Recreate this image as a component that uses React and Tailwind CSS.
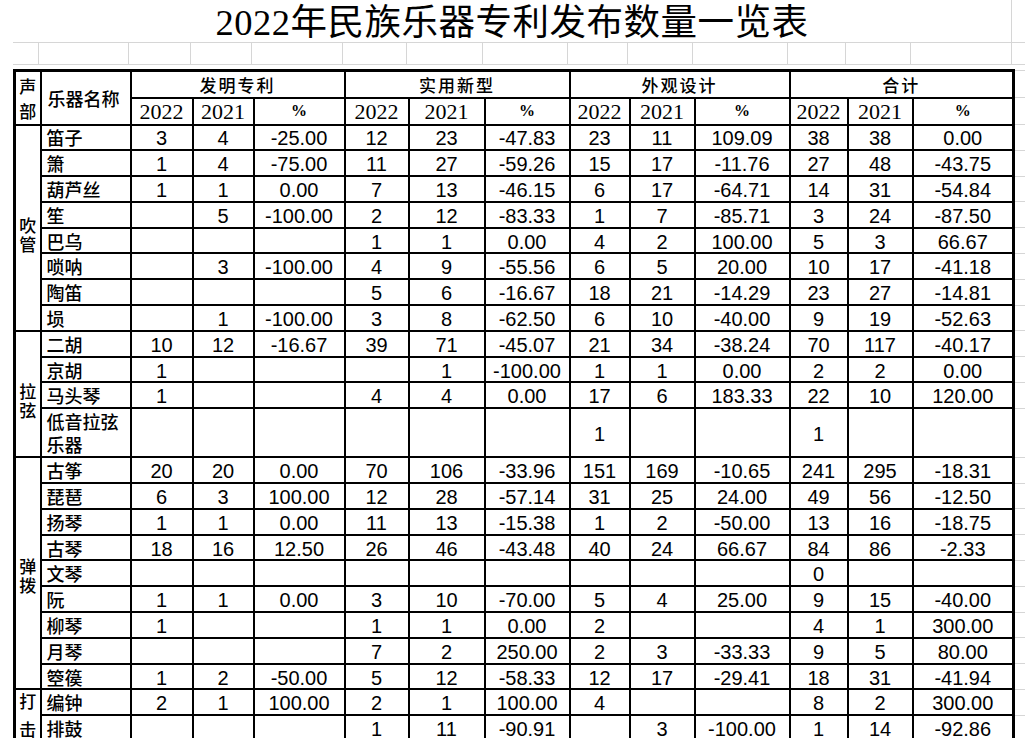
import React from 'react'

const COLS = [26, 90, 62, 61, 91, 64, 76, 85, 60, 65, 95, 58, 65, 101, 13]

const serif = "font-['Liberation_Serif','Noto_Sans_CJK_SC',serif]"
const cjk = "font-['Noto_Sans_CJK_SC','Liberation_Serif',serif]"
const sans = "font-['Liberation_Sans',Arial,sans-serif]"

// name, then 发明(22,21,%) 实用(22,21,%) 外观(22,21,%) 合计(22,21,%)
const GROUPS = [
  {
    label: '吹管', pad: 'pt-[16px]', gap: 'tracking-[2px]', box: 'h-[38px]',
    rows: [
      ['笛子', '3', '4', '-25.00', '12', '23', '-47.83', '23', '11', '109.09', '38', '38', '0.00'],
      ['箫', '1', '4', '-75.00', '11', '27', '-59.26', '15', '17', '-11.76', '27', '48', '-43.75'],
      ['葫芦丝', '1', '1', '0.00', '7', '13', '-46.15', '6', '17', '-64.71', '14', '31', '-54.84'],
      ['笙', '', '5', '-100.00', '2', '12', '-83.33', '1', '7', '-85.71', '3', '24', '-87.50'],
      ['巴乌', '', '', '', '1', '1', '0.00', '4', '2', '100.00', '5', '3', '66.67'],
      ['唢呐', '', '3', '-100.00', '4', '9', '-55.56', '6', '5', '20.00', '10', '17', '-41.18'],
      ['陶笛', '', '', '', '5', '6', '-16.67', '18', '21', '-14.29', '23', '27', '-14.81'],
      ['埙', '', '1', '-100.00', '3', '8', '-62.50', '6', '10', '-40.00', '9', '19', '-52.63'],
    ],
  },
  {
    label: '拉弦', pad: 'pt-[16px]', gap: 'tracking-[2px]', box: 'h-[38px]',
    rows: [
      ['二胡', '10', '12', '-16.67', '39', '71', '-45.07', '21', '34', '-38.24', '70', '117', '-40.17'],
      ['京胡', '1', '', '', '', '1', '-100.00', '1', '1', '0.00', '2', '2', '0.00'],
      ['马头琴', '1', '', '', '4', '4', '0.00', '17', '6', '183.33', '22', '10', '120.00'],
      ['低音拉弦乐器', '', '', '', '', '', '', '1', '', '', '1', '', '', true],
    ],
  },
  {
    label: '弹拨', pad: 'pt-[8px]', gap: 'tracking-[2px]', box: 'h-[38px]',
    rows: [
      ['古筝', '20', '20', '0.00', '70', '106', '-33.96', '151', '169', '-10.65', '241', '295', '-18.31'],
      ['琵琶', '6', '3', '100.00', '12', '28', '-57.14', '31', '25', '24.00', '49', '56', '-12.50'],
      ['扬琴', '1', '1', '0.00', '11', '13', '-15.38', '1', '2', '-50.00', '13', '16', '-18.75'],
      ['古琴', '18', '16', '12.50', '26', '46', '-43.48', '40', '24', '66.67', '84', '86', '-2.33'],
      ['文琴', '', '', '', '', '', '', '', '', '', '0', '', ''],
      ['阮', '1', '1', '0.00', '3', '10', '-70.00', '5', '4', '25.00', '9', '15', '-40.00'],
      ['柳琴', '1', '', '', '1', '1', '0.00', '2', '', '', '4', '1', '300.00'],
      ['月琴', '', '', '', '7', '2', '250.00', '2', '3', '-33.33', '9', '5', '80.00'],
      ['箜篌', '1', '2', '-50.00', '5', '12', '-58.33', '12', '17', '-29.41', '18', '31', '-41.94'],
    ],
  },
  {
    label: '打击', pad: 'pt-0', gap: 'tracking-[11px]', box: 'h-[45px]',
    rows: [
      ['编钟', '2', '1', '100.00', '2', '1', '100.00', '4', '', '', '8', '2', '300.00'],
      ['排鼓', '', '', '', '1', '11', '-90.91', '', '3', '-100.00', '1', '14', '-92.86'],
    ],
  },
]

const cell = 'border-2 border-black p-0'
const margin = 'border-y border-[#d6d6d6] p-0'

function Header() {
  const groups = ['发明专利', '实用新型', '外观设计', '合计']
  return (
    <thead>
      <tr className="h-[27px]">
        <td rowSpan={2} className={`${cell} border-l-[3px] border-t-[3px] text-center align-middle ${cjk} text-[17px] leading-[25px] font-medium`}>
          <div>声</div>
          <div>部</div>
        </td>
        <td rowSpan={2} className={`${cell} border-t-[3px] pl-[6px] text-left align-middle ${cjk} text-[18px] leading-none font-medium`}>
          乐器名称
        </td>
        {groups.map((g, i) => (
          <td key={g} colSpan={3} className={`${cell} border-t-[3px] ${i === 3 ? 'border-r-[3px]' : ''} text-center ${cjk} text-[17px] leading-none tracking-[2px] font-medium`}>
            {g}
          </td>
        ))}
        <td className={margin} />
      </tr>
      <tr className="h-[27px]">
        {groups.map((g, i) => (
          <React.Fragment key={g}>
            <td className={`${cell} text-center ${serif} text-[22px] leading-none pt-[2px]`}>2022</td>
            <td className={`${cell} text-center ${serif} text-[22px] leading-none pt-[2px]`}>2021</td>
            <td className={`${cell} ${i === 3 ? 'border-r-[3px]' : ''} text-center ${serif} text-[16px] leading-none font-bold`}>%</td>
          </React.Fragment>
        ))}
        <td className={margin} />
      </tr>
    </thead>
  )
}

function Body() {
  return (
    <tbody>
      {GROUPS.map(g =>
        g.rows.map((r, ri) => {
          const tall = r[13] === true
          return (
            <tr key={r[0]} className={tall ? 'h-[49px]' : 'h-[25.8px]'}>
              {ri === 0 && (
                <td rowSpan={g.rows.length} className={`${cell} border-l-[3px] text-center align-middle ${g.pad}`}>
                  <div className={`flex justify-center items-start ${g.box}`}>
                    <span className={`[writing-mode:vertical-rl] whitespace-nowrap ${cjk} text-[17px] leading-none ${g.gap} font-medium`}>
                      {g.label}
                    </span>
                  </div>
                </td>
              )}
              <td className={`${cell} pl-[5px] text-left align-middle ${cjk} text-[18px] ${tall ? 'leading-[23px]' : 'leading-none'} font-medium`}>
                {r[0]}
              </td>
              {r.slice(1, 13).map((v, ci) => (
                <td key={ci} className={`${cell} ${ci === 11 ? 'border-r-[3px]' : ''} text-center align-middle ${sans} text-[20px] leading-none pt-[2px] text-black`}>
                  {v}
                </td>
              ))}
              <td className={margin} />
            </tr>
          )
        })
      )}
    </tbody>
  )
}

export default function App() {
  return (
    <div className="w-[1025px] h-[738px] overflow-hidden bg-white text-black">
      {/* title + empty sheet row */}
      <div className="ml-[13px] w-[1012px]">
        <div className="flex">
          <div className={`w-[999px] h-[43px] border-b border-r border-[#d6d6d6] flex items-center justify-center pt-[4px] ${serif} text-[36.5px] tracking-[0.5px] leading-none`}>
            2022年民族乐器专利发布数量一览表
          </div>
          <div className="w-[13px] h-[43px] border-b border-[#d6d6d6]" />
        </div>
        <div className="flex h-[22px] border-b border-[#d6d6d6]">
          {COLS.map((w, i) => (
            <div key={i} style={{ width: w }} className={`h-full ${i < 14 ? 'border-r border-[#d6d6d6]' : ''}`} />
          ))}
        </div>
      </div>

      <table className="ml-[13px] mt-[4px] table-fixed border-collapse w-[1012px]">
        <colgroup>
          {COLS.map((w, i) => (
            <col key={i} style={{ width: w }} />
          ))}
        </colgroup>
        <Header />
        <Body />
      </table>
    </div>
  )
}
